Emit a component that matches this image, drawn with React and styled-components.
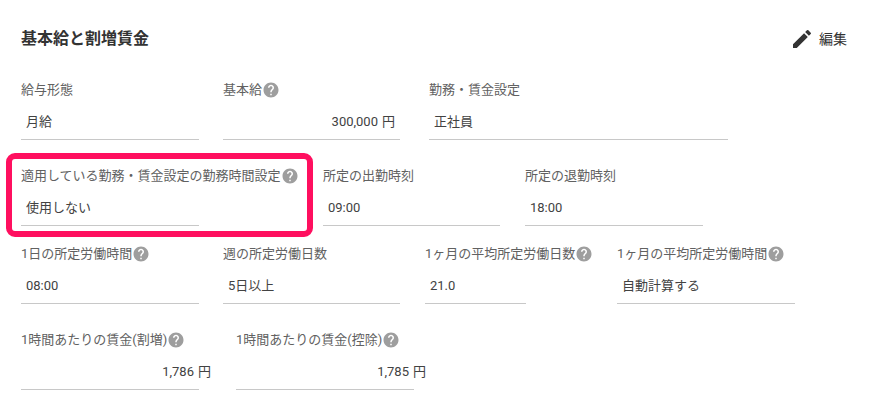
import React from 'react';
import styled, { createGlobalStyle } from 'styled-components';
import { MdEdit, MdHelp } from 'react-icons/md';

const GlobalStyle = createGlobalStyle`
    html, body {
        margin: 0;
        padding: 0;
        background: #fff;
    }
    body {
        font-family: Roboto, "Noto Sans CJK JP", sans-serif;
        color: #424242;
    }
`;

const Page = styled.div`
    width: 879px;
    height: 414px;
    overflow: hidden;
    box-sizing: border-box;
    padding: 27px 32px 0 21px;
`;
const Header = styled.div`
    display: flex;
    align-items: center;
    justify-content: space-between;
    height: 24px;
    margin-bottom: 29px;
`;
const Title = styled.h2`
    margin: 0;
    font-size: 16px;
    font-weight: 700;
    line-height: 24px;
    color: #333;
`;
const EditButton = styled.button`
    display: flex;
    align-items: center;
    gap: 5px;
    padding: 0;
    border: none;
    background: none;
    font: inherit;
    font-size: 14px;
    line-height: 24px;
    color: #333;
    cursor: pointer;
`;
const Row = styled.div`
    display: flex;
    height: ${(p) => p.$height || 86}px;
`;
const Field = styled.div`
    position: relative;
    flex: none;
    width: ${(p) => p.$width || 178}px;
    margin-right: ${(p) => p.$after || 0}px;
    ${(p) =>
        p.$marked &&
        `
        &::after {
            content: '';
            position: absolute;
            left: -15px;
            top: -13px;
            width: 307px;
            height: 84px;
            box-sizing: border-box;
            border: 6.5px solid #ff0f5f;
            border-radius: 9px;
            pointer-events: none;
        }
    `}
`;
const Label = styled.div`
    display: flex;
    align-items: center;
    height: 20px;
    font-size: 13px;
    line-height: 20px;
    color: #616161;
    white-space: nowrap;
`;
const HelpIcon = styled(MdHelp)`
    flex: none;
    width: 18px;
    height: 18px;
    color: #9e9e9e;
`;
const Value = styled.div`
    display: flex;
    justify-content: ${(p) => (p.$right ? 'flex-end' : 'flex-start')};
    gap: 4px;
    box-sizing: border-box;
    height: 40px;
    padding: 12px 5px 0;
    border-bottom: 1px solid #c8c8c8;
    font-size: 13px;
    line-height: 19px;
    color: #424242;
    white-space: nowrap;
`;
const Unit = styled.span`
    margin-right: ${(p) => p.$overflow || 0}px;
`;

function FormField({ label, help, value, unit, overflow, width, after, marked }) {
    return (
        <Field $width={width} $after={after} $marked={marked}>
            <Label>
                {label}
                {help && <HelpIcon />}
            </Label>
            <Value $right={!!unit}>
                <span>{value}</span>
                {unit && <Unit $overflow={overflow}>{unit}</Unit>}
            </Value>
        </Field>
    );
}

export default function App() {
    return (
        <Page>
            <GlobalStyle />
            <Header>
                <Title>基本給と割増賃金</Title>
                <EditButton>
                    <MdEdit size={24} color="#333" />
                    編集
                </EditButton>
            </Header>
            <Row>
                <FormField label="給与形態" value="月給" after={24} />
                <FormField label="基本給" help value="300,000" unit="円" width={177} after={29} />
                <FormField label="勤務・賃金設定" value="正社員" width={299} />
            </Row>
            <Row $height={78}>
                <FormField label="適用している勤務・賃金設定の勤務時間設定" help value="使用しない" after={124} marked />
                <FormField label="所定の出勤時刻" value="09:00" width={177} after={25} />
                <FormField label="所定の退勤時刻" value="18:00" />
            </Row>
            <Row>
                <FormField label="1日の所定労働時間" help value="08:00" after={24} />
                <FormField label="週の所定労働日数" value="5日以上" width={177} after={25} />
                <FormField label="1ヶ月の平均所定労働日数" help value="21.0" width={101} after={91} />
                <FormField label="1ヶ月の平均所定労働時間" help value="自動計算する" />
            </Row>
            <Row>
                <FormField label="1時間あたりの賃金(割増)" help value="1,786" unit="円" overflow={-17} after={37} />
                <FormField label="1時間あたりの賃金(控除)" help value="1,785" unit="円" overflow={-17} />
            </Row>
        </Page>
    );
}
